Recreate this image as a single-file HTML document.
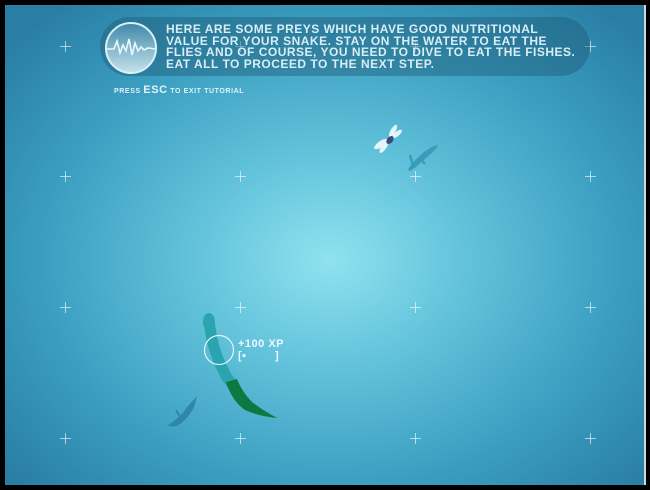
<!DOCTYPE html>
<html><head><style>
html,body{margin:0;padding:0;background:#000;width:650px;height:490px;overflow:hidden}
#g{position:absolute;left:5px;top:5px;width:639px;height:480px;
background:radial-gradient(ellipse 420px 330px at 325px 255px,#8fe2ef 0%,#5fc0d9 35%,#3a9dc0 70%,#2a7ea5 100%);}
#edge{position:absolute;left:644px;top:5px;width:2px;height:480px;background:#cfd8dc}
.c{position:absolute;width:11px;height:11px}
.c:before{content:"";position:absolute;left:5px;top:0;width:1px;height:11px;background:rgba(255,255,255,.6)}
.c:after{content:"";position:absolute;top:5px;left:0;height:1px;width:11px;background:rgba(255,255,255,.6)}
#panel{position:absolute;left:100px;top:17px;width:490px;height:59px;border-radius:30px;background:rgba(30,90,120,.45)}
#txt{position:absolute;left:166px;top:24px;font:bold 12px/11.7px "Liberation Sans",sans-serif;color:#d8eef5;letter-spacing:.5px;white-space:pre}
#esc{position:absolute;left:114px;top:84px;font:bold 7px "Liberation Sans",sans-serif;color:#e0f3f8;letter-spacing:.6px;white-space:pre}
#esc b{font-size:11px}
#xp{position:absolute;left:238px;top:338px;font:bold 11px/12px "Liberation Sans",sans-serif;color:#eafafd;letter-spacing:.5px;white-space:pre}
</style></head><body>
<div id="g"></div><div id="edge"></div>
<div class="c" style="left:60px;top:41px"></div><div class="c" style="left:235px;top:41px"></div><div class="c" style="left:410px;top:41px"></div><div class="c" style="left:585px;top:41px"></div>
<div class="c" style="left:60px;top:171px"></div><div class="c" style="left:235px;top:171px"></div><div class="c" style="left:410px;top:171px"></div><div class="c" style="left:585px;top:171px"></div>
<div class="c" style="left:60px;top:302px"></div><div class="c" style="left:235px;top:302px"></div><div class="c" style="left:410px;top:302px"></div><div class="c" style="left:585px;top:302px"></div>
<div class="c" style="left:60px;top:433px"></div><div class="c" style="left:235px;top:433px"></div><div class="c" style="left:410px;top:433px"></div><div class="c" style="left:585px;top:433px"></div>
<div id="panel"></div>
<svg style="position:absolute;left:104px;top:21px" width="54" height="54" viewBox="0 0 54 54">
<defs><linearGradient id="lg" x1="0" y1="0" x2="0" y2="1"><stop offset="0" stop-color="#3f88a8"/><stop offset="1" stop-color="#c5e3ec"/></linearGradient></defs>
<circle cx="27" cy="27" r="25" fill="url(#lg)" stroke="#d8f0f6" stroke-width="2"/>
<path d="M3 28 L10 28 L13 20 L16 32 L19 24 L22 30 L25 18 L28 34 L31 22 L34 30 L37 26 L40 29 L44 27 L51 28" fill="none" stroke="#eaf8fb" stroke-width="1.6"/>
</svg>
<div id="txt">HERE ARE SOME PREYS WHICH HAVE GOOD NUTRITIONAL
VALUE FOR YOUR SNAKE. STAY ON THE WATER TO EAT THE
FLIES AND OF COURSE, YOU NEED TO DIVE TO EAT THE FISHES.
EAT ALL TO PROCEED TO THE NEXT STEP.</div>
<div id="esc">PRESS <b>ESC</b> TO EXIT TUTORIAL</div>
<svg style="position:absolute;left:0;top:0" width="650" height="490">
<path d="M209 320 Q212 350 224 372 Q228 380 232 384" fill="none" stroke="#2aa5b0" stroke-width="11" stroke-linecap="round"/>
<ellipse cx="209" cy="322" rx="6" ry="9" fill="#2aa5b0"/>
<path d="M226 382 L237 379 Q242 392 252 402 Q262 410 277 418 Q258 416 245 410 Q232 401 226 382 Z" fill="#0c7a40"/>
<circle cx="219" cy="350" r="14.5" fill="none" stroke="#e6f8fb" stroke-width="1.2"/>
<path d="M170 425 Q178 420 184 413 Q190 405 195 400 L193 407 Q189 415 181 422 Q175 427 170 425 Z M180 417 L176 410 M186 409 L190 406" fill="#2f86a6" stroke="#2f86a6" stroke-width="2"/>
<path d="M409 170 Q416 160 426 152 Q432 148 437 146 L431 152 Q422 160 414 167 Z M413 165 L410 155 M420 158 L425 164" fill="#3a9cb8" stroke="#3a9cb8" stroke-width="2.5"/>
<ellipse cx="381" cy="144" rx="8" ry="3" transform="rotate(-35 381 144)" fill="#e4f6fa"/>
<ellipse cx="384" cy="147" rx="7" ry="2.5" transform="rotate(-55 384 147)" fill="#e4f6fa"/>
<ellipse cx="393" cy="131" rx="7" ry="2.5" transform="rotate(-60 393 131)" fill="#e4f6fa"/>
<ellipse cx="397" cy="134" rx="6" ry="2.3" transform="rotate(-40 397 134)" fill="#e4f6fa"/>
<ellipse cx="390" cy="140" rx="3" ry="4.5" transform="rotate(40 390 140)" fill="#3a4d7a"/>
</svg>
<div id="xp">+100 XP
[▪        ]</div>
</body></html>
